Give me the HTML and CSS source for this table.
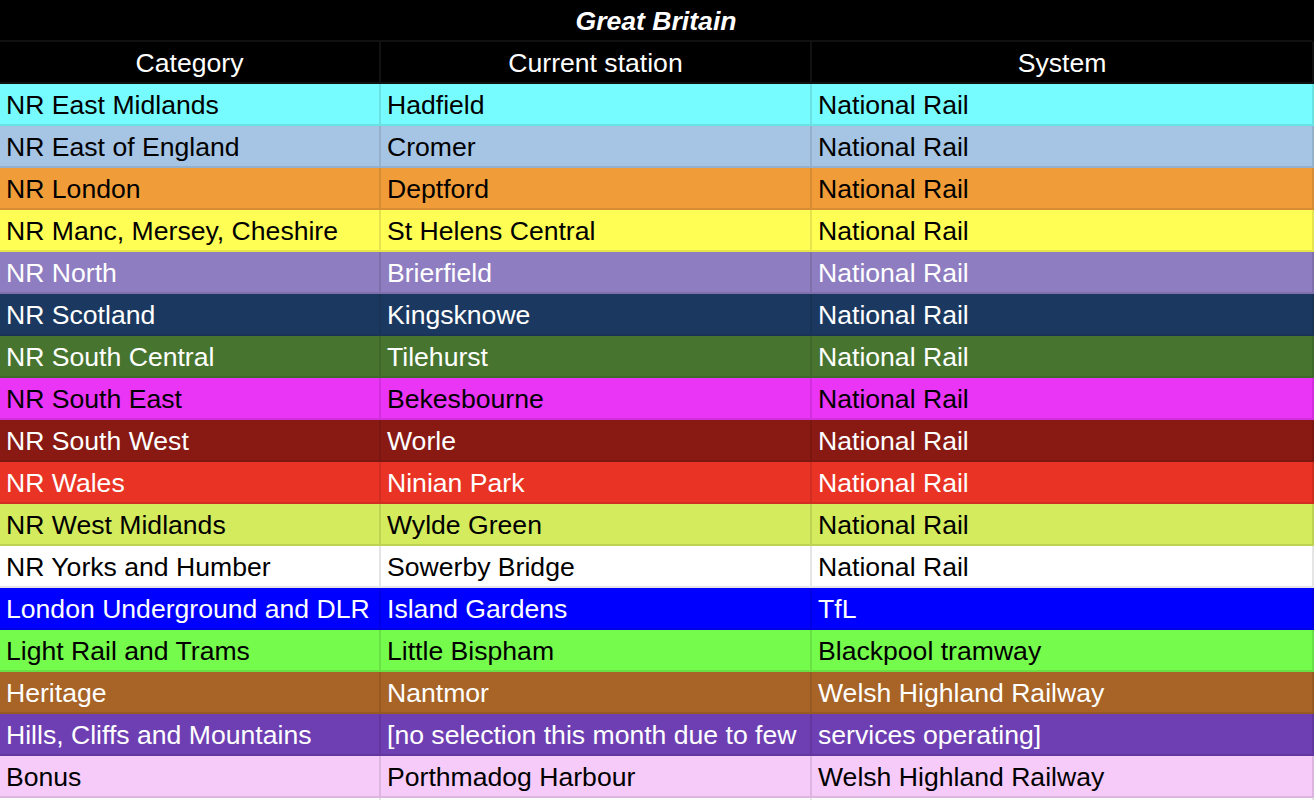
FILE: index.html
```html
<!DOCTYPE html>
<html>
<head>
<meta charset="utf-8">
<link rel="stylesheet" href="styles.css">
</head>
<body>
<table class="sheet">
  <colgroup><col class="c1"><col class="c2"><col class="c3"></colgroup>
  <thead>
    <tr class="title-row"><th colspan="3" class="title">Great Britain</th></tr>
    <tr class="head-row"><th>Category</th><th>Current station</th><th>System</th></tr>
  </thead>
  <tbody>
    <tr class="r-em"><td>NR East Midlands</td><td>Hadfield</td><td>National Rail</td></tr>
    <tr class="r-ee"><td>NR East of England</td><td>Cromer</td><td>National Rail</td></tr>
    <tr class="r-ld"><td>NR London</td><td>Deptford</td><td>National Rail</td></tr>
    <tr class="r-mm"><td>NR Manc, Mersey, Cheshire</td><td>St Helens Central</td><td>National Rail</td></tr>
    <tr class="r-no"><td>NR North</td><td>Brierfield</td><td>National Rail</td></tr>
    <tr class="r-sc"><td>NR Scotland</td><td>Kingsknowe</td><td>National Rail</td></tr>
    <tr class="r-sce"><td>NR South Central</td><td>Tilehurst</td><td>National Rail</td></tr>
    <tr class="r-se"><td>NR South East</td><td>Bekesbourne</td><td>National Rail</td></tr>
    <tr class="r-sw"><td>NR South West</td><td>Worle</td><td>National Rail</td></tr>
    <tr class="r-wa"><td>NR Wales</td><td>Ninian Park</td><td>National Rail</td></tr>
    <tr class="r-wm"><td>NR West Midlands</td><td>Wylde Green</td><td>National Rail</td></tr>
    <tr class="r-yh"><td>NR Yorks and Humber</td><td>Sowerby Bridge</td><td>National Rail</td></tr>
    <tr class="r-lu"><td>London Underground and DLR</td><td>Island Gardens</td><td>TfL</td></tr>
    <tr class="r-lr"><td>Light Rail and Trams</td><td>Little Bispham</td><td>Blackpool tramway</td></tr>
    <tr class="r-he"><td>Heritage</td><td>Nantmor</td><td>Welsh Highland Railway</td></tr>
    <tr class="r-hi"><td>Hills, Cliffs and Mountains</td><td>[no selection this month due to few</td><td>services operating]</td></tr>
    <tr class="r-bo"><td>Bonus</td><td>Porthmadog Harbour</td><td>Welsh Highland Railway</td></tr>
    <tr class="r-blank"><td></td><td></td><td></td></tr>
  </tbody>
</table>
</body>
</html>
```
FILE: styles.css
```css
html, body {
  margin: 0;
  padding: 0;
  background: #ffffff;
}
.sheet {
  width: 1314px;
  table-layout: fixed;
  border-collapse: separate;
  border-spacing: 0;
  font-family: "Liberation Sans", Arial, sans-serif;
  font-size: 26.6px;
}
.c1 { width: 381px; }
.c2 { width: 431px; }
.c3 { width: 502px; }
.sheet th,
.sheet td {
  height: 38px;
  padding: 2px 0 0 6px;
  box-sizing: content-box;
  white-space: nowrap;
  overflow: hidden;
  vertical-align: middle;
  line-height: 38px;
  border-right: 2px solid rgba(0, 0, 0, 0.1);
  border-bottom: 2px solid rgba(0, 0, 0, 0.1);
}
.sheet th {
  background: #000;
  color: #fff;
  font-weight: normal;
  text-align: center;
  padding: 2px 0 0 0;
  border-right-color: #111;
  border-bottom-color: #111;
}
.sheet th.title {
  font-weight: bold;
  font-style: italic;
}
.sheet .title-row th { border-right-color: #000; }
.r-em td { background: #76fcfe; color: #000; }
.r-ee td { background: #a6c4e4; color: #000; }
.r-ld td { background: #f09d39; color: #000; }
.r-mm td { background: #fffe55; color: #000; }
.r-no td { background: #8e7dc0; color: #fff; }
.r-sc td { background: #1b3960; color: #fff; }
.r-sce td { background: #477530; color: #fff; }
.r-se td { background: #ea34f6; color: #000; }
.r-sw td { background: #881a13; color: #fff; }
.r-wa td { background: #e93324; color: #fff; }
.r-wm td { background: #d3eb5c; color: #000; }
.r-yh td { background: #ffffff; color: #000; }
.r-lu td { background: #0000ff; color: #fff; }
.r-lr td { background: #75fb4c; color: #000; }
.r-he td { background: #a76426; color: #fff; }
.r-hi td { background: #6e3fb3; color: #fff; }
.r-bo td { background: #f6cbf9; color: #000; }
.r-blank td { background: #fff; }
```
